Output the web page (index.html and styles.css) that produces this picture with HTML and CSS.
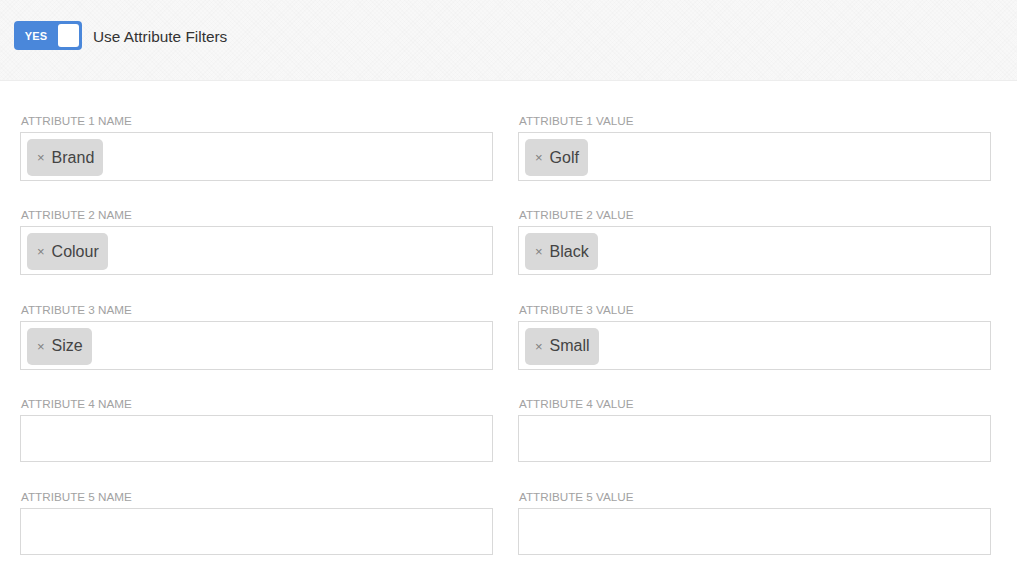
FILE: index.html
```html
<!DOCTYPE html>
<html>
<head>
<meta charset="utf-8">
<link rel="stylesheet" href="styles.css">
</head>
<body>
<header class="topbar">
  <div class="toggle">
    <span class="toggle-label">YES</span>
    <span class="toggle-knob"></span>
  </div>
  <span class="topbar-title">Use Attribute Filters</span>
</header>
<main class="form">
  <div class="field"><div class="label">Attribute 1 Name</div><div class="input"><span class="tag"><span class="x">×</span>Brand</span></div></div>
  <div class="field"><div class="label">Attribute 1 Value</div><div class="input"><span class="tag"><span class="x">×</span>Golf</span></div></div>
  <div class="field"><div class="label">Attribute 2 Name</div><div class="input"><span class="tag"><span class="x">×</span>Colour</span></div></div>
  <div class="field"><div class="label">Attribute 2 Value</div><div class="input"><span class="tag"><span class="x">×</span>Black</span></div></div>
  <div class="field"><div class="label">Attribute 3 Name</div><div class="input"><span class="tag"><span class="x">×</span>Size</span></div></div>
  <div class="field"><div class="label">Attribute 3 Value</div><div class="input"><span class="tag"><span class="x">×</span>Small</span></div></div>
  <div class="field"><div class="label">Attribute 4 Name</div><div class="input"></div></div>
  <div class="field"><div class="label">Attribute 4 Value</div><div class="input"></div></div>
  <div class="field"><div class="label">Attribute 5 Name</div><div class="input"></div></div>
  <div class="field"><div class="label">Attribute 5 Value</div><div class="input"></div></div>
</main>
</body>
</html>
```
FILE: styles.css
```css
html, body {
  margin: 0;
  padding: 0;
  background: #ffffff;
  font-family: "Liberation Sans", Arial, sans-serif;
}
.topbar {
  height: 80px;
  box-sizing: border-box;
  background-color: #f8f8f8;
  background-image:
    repeating-linear-gradient(45deg, rgba(0,0,0,0.012) 0 1px, transparent 1px 3px),
    repeating-linear-gradient(-45deg, rgba(0,0,0,0.012) 0 1px, transparent 1px 3px);
  border-bottom: 1px solid #ededed;
  display: flex;
  align-items: flex-start;
  padding: 21px 0 0 14px;
  height: 81px;
}
.toggle {
  width: 68px;
  height: 29px;
  box-sizing: border-box;
  background: #4a87da;
  border-radius: 4px;
  display: flex;
  align-items: center;
  justify-content: space-between;
  padding: 0 3px 0 0;
}
.toggle-label {
  color: #ffffff;
  font-weight: bold;
  font-size: 11px;
  width: 46px;
  text-align: center;
  letter-spacing: 0.2px;
}
.toggle-knob {
  width: 22px;
  height: 23px;
  background: #ffffff;
  border-radius: 3px;
}
.topbar-title {
  margin-left: 11px;
  font-size: 15.4px;
  line-height: 18px;
  color: #333333;
  margin-top: 7px;
}
.form {
  display: grid;
  grid-template-columns: 473px 473px;
  column-gap: 25px;
  padding: 33px 26px 0 20px;
}
.field {
  margin-bottom: 27.4px;
}
.label {
  font-size: 11.7px;
  line-height: 14px;
  color: #a2a2a2;
  text-transform: uppercase;
  margin-bottom: 4px;
  padding-left: 1px;
}
.input {
  box-sizing: border-box;
  min-height: 47px;
  border: 1px solid #d9d9d9;
  background: #fff;
  padding: 6px 6px 4px 6px;
  display: flex;
  align-items: flex-start;
}
.tag {
  display: inline-flex;
  align-items: center;
  height: 37px;
  padding: 0 9px 0 10px;
  background: #d9d9d9;
  border-radius: 5px;
  font-size: 16px;
  color: #444444;
}
.x {
  font-size: 13px;
  color: #808080;
  margin-right: 7px;
}
```
